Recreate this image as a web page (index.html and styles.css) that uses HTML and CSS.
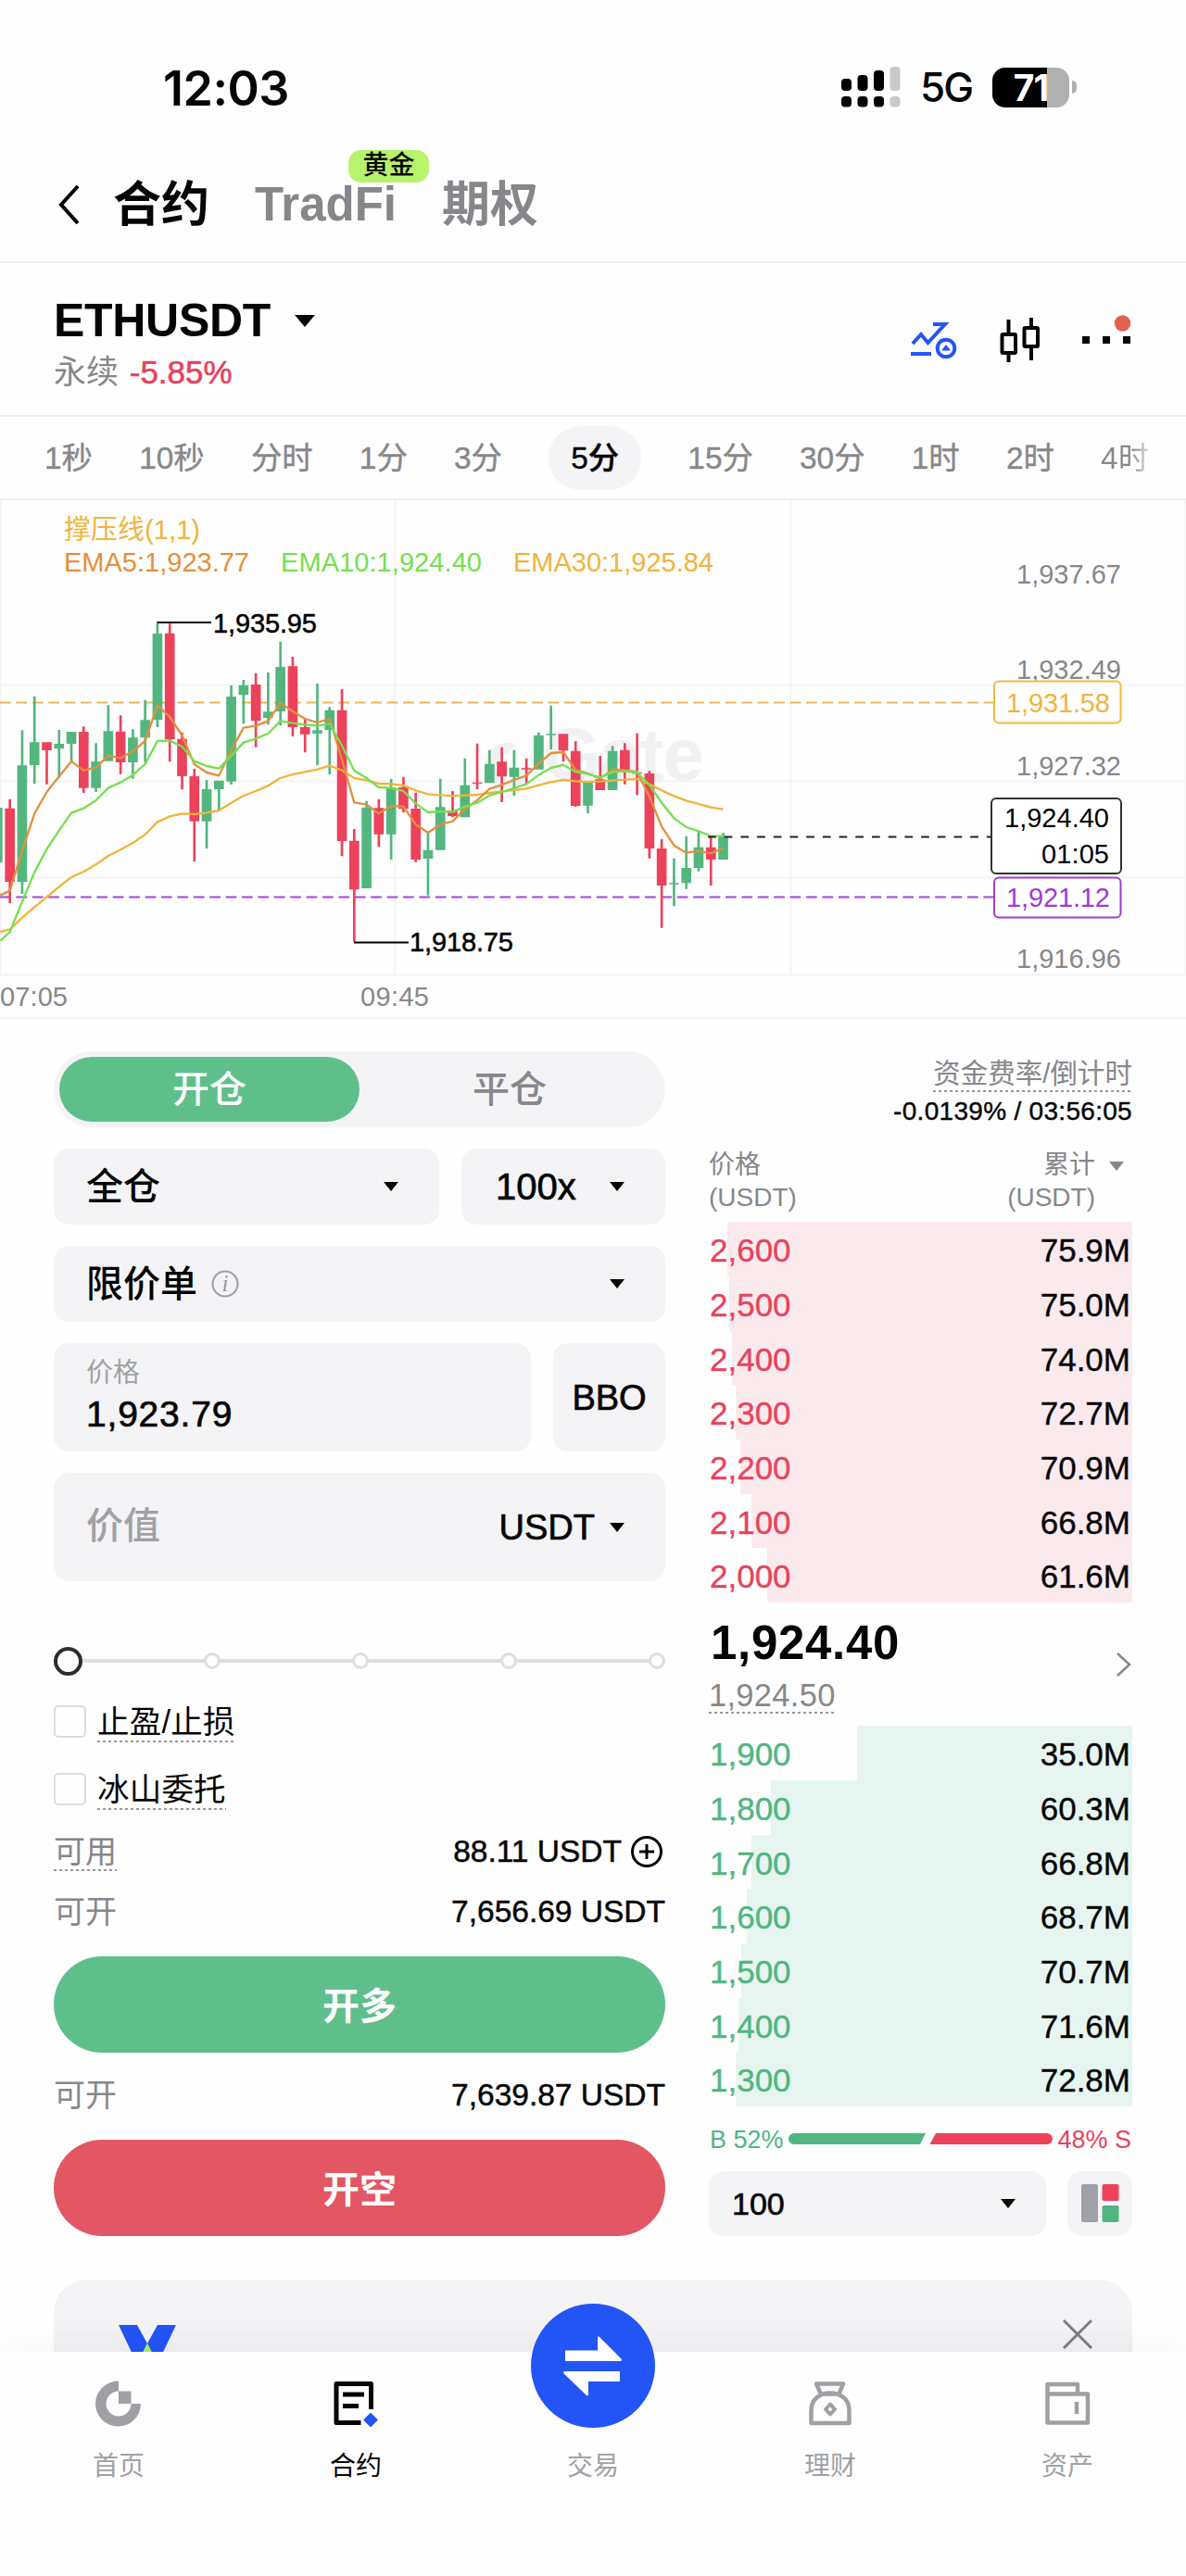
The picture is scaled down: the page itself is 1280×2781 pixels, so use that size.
FILE: index.html
```html
<!DOCTYPE html>
<html lang="zh-CN">
<head>
  <meta charset="UTF-8" />
  <title>ETHUSDT 永续合约</title>
  <link rel="stylesheet" href="styles.css">
</head>
<body>
  <div class="status-bar">
    <span class="time">12:03</span>
    <div class="status-icons">
      <svg class="signal" width="65" height="44" viewBox="0 0 65 44">
        <g fill="#000">
          <rect x="0" y="13" width="11" height="13" rx="4" />
          <rect x="17.500" y="9" width="11" height="17" rx="4" />
          <rect x="35" y="4" width="11" height="22" rx="4" />
          <rect x="0" y="32" width="11" height="11.500" rx="4" />
          <rect x="17.500" y="32" width="11" height="11.500" rx="4" />
          <rect x="35" y="32" width="11" height="11.500" rx="4" />
        </g>
        <g fill="#c9c9c9">
          <rect x="52.500" y="0" width="11" height="26" rx="4" />
          <rect x="52.500" y="32" width="11" height="11.500" rx="4" />
        </g>
      </svg>
      <span class="network">5G</span>
      <div class="battery"><span>71</span></div>
      <i class="battery-cap"></i>
    </div>
  </div>

  <header class="top-nav">
    <svg class="back" width="28" height="46" viewBox="0 0 28 46"><path d="M24 3 6 23l18 20" fill="none" stroke="#000" stroke-width="4" /></svg>
    <a class="active">合约</a>
    <a class="tradfi">TradFi<em>黄金</em></a>
    <a>期权</a>
  </header>

  <section class="symbol">
    <div>
      <h1>ETHUSDT <i class="caret caret-lg"></i></h1>
      <p>永续 <b>-5.85%</b></p>
    </div>
    <svg class="tools" width="240" height="56" viewBox="0 0 240 56">
      <g fill="none" stroke="#2354f5" stroke-width="4">
        <path d="M4 31 13 21l7.500 9L39 10H26" />
        <path d="M2 42h22" />
        <circle cx="40" cy="36" r="9.300" />
      </g>
      <path d="M35 38.500 40 32l5 6.500z" fill="#2354f5" />
      <g fill="none" stroke="#050505" stroke-width="4">
        <path d="M107.500 5v15M107.500 42v9M132 3v10M132 35v14" />
        <rect x="100.500" y="21" width="14.500" height="20" rx="1" />
        <rect x="124.500" y="14" width="14.500" height="20" rx="1" />
      </g>
      <path d="M187 23h8v8h-8zM209 23h8v8h-8zM231 23h8v8h-8z" fill="#050505" />
      <circle cx="230.500" cy="9" r="8.700" fill="#e4604f" />
    </svg>
  </section>

  <nav class="periods">
    <a>1秒</a><a>10秒</a><a>分时</a><a>1分</a><a>3分</a><a class="active">5分</a><a>15分</a><a>30分</a><a>1时</a><a>2时</a><a class="fade">4时</a>
  </nav>

  <section class="chart">
    <svg width="1280" height="559" viewBox="0 0 1280 559">
      <path class="grid" d="M0 199.500h1280M0 303.500h1280M0 407.500h1280M0 512.500h1280M.5 0v512M426.500 0v512M853.500 0v512M1279.500 0v512" />
      <g class="watermark">
        <path d="M556 263a25 25 0 1 0 17 25h-12a13 13 0 1 1-13-13z" />
        <text x="586" y="302" textLength="174">Gate</text>
      </g>
      <path class="dash" d="M0 218.500H1073" stroke="#e9b84e" />
      <path class="dash" d="M0 428.500H1073" stroke="#a544d8" />
      <g id="candles" transform="translate(0 100) scale(.33333)"></g>
      <path d="M764 363.500H1069" stroke="#222" stroke-width="2" stroke-dasharray="8.700 9" />
      <path d="M170 132H228M382 477.500H441" stroke="#000" stroke-width="2" />
      <g class="callout">
        <text x="230" y="142.500" textLength="112">1,935.95</text>
        <text x="442" y="487" textLength="112">1,918.75</text>
      </g>
      <g class="legend">
        <text x="69" y="42" fill="#efb43c" textLength="147">撑压线(1,1)</text>
        <text x="69" y="77" fill="#e58f3a" textLength="200">EMA5:1,923.77</text>
        <text x="303" y="77" fill="#74e04f" textLength="217">EMA10:1,924.40</text>
        <text x="554" y="77" fill="#efb43c" textLength="216">EMA30:1,925.84</text>
      </g>
      <g class="axis">
        <text x="1097" y="90" textLength="113">1,937.67</text>
        <text x="1097" y="193" textLength="113">1,932.49</text>
        <text x="1097" y="297" textLength="113">1,927.32</text>
        <text x="1097" y="505" textLength="113">1,916.96</text>
        <text x="0" y="546" textLength="73">07:05</text>
        <text x="389" y="546" textLength="74">09:45</text>
      </g>
      <g class="tags">
        <rect x="1073" y="195.500" width="136.500" height="45" rx="5" stroke="#efb941" />
        <text x="1086" y="229" fill="#efb43c" textLength="112">1,931.58</text>
        <rect x="1073" y="407.500" width="136.500" height="43" rx="5" stroke="#a13bd3" />
        <text x="1086" y="439" fill="#a13bd3" textLength="112">1,921.12</text>
        <rect x="1070" y="322" width="140" height="81" rx="5" stroke="#333" />
        <text x="1084" y="353" fill="#000" textLength="113">1,924.40</text>
        <text x="1124" y="392" fill="#000" textLength="73">01:05</text>
      </g>
    </svg>
  </section>

  <main class="trade">
    <section class="order-form">
      <div class="side-tabs"><a class="active">开仓</a><a>平仓</a></div>
      <div class="row">
        <div class="field margin-mode">全仓 <i class="caret"></i></div>
        <div class="field leverage">100x <i class="caret"></i></div>
      </div>
      <div class="field">
        <span>限价单</span>
        <svg class="info" width="32" height="32" viewBox="0 0 32 32"><circle cx="16" cy="16" r="13.500" fill="none" stroke="#a2a2a6" stroke-width="2.200" /><text x="12.500" y="24">i</text></svg>
        <i class="caret"></i>
      </div>
      <div class="row">
        <div class="field tall price"><label>价格</label><span>1,923.79</span></div>
        <div class="field tall bbo">BBO</div>
      </div>
      <div class="field tall amount"><span class="hint">价值</span><span class="unit">USDT</span><i class="caret"></i></div>

      <div class="slider"><i class="thumb"></i><i></i><i></i><i></i><i></i></div>

      <div class="check"><i></i><span>止盈/止损</span></div>
      <div class="check"><i></i><span>冰山委托</span></div>

      <div class="info-row"><span class="dotted">可用</span><b>88.11 USDT</b>
        <svg width="36" height="36" viewBox="0 0 36 36"><circle cx="18" cy="18" r="15.500" /><path d="M10 18h16M18 10v16" /></svg>
      </div>
      <div class="info-row"><span>可开</span><b>7,656.69 USDT</b></div>
      <button class="long">开多</button>
      <div class="info-row last"><span>可开</span><b>7,639.87 USDT</b></div>
      <button class="short">开空</button>
    </section>

    <section class="book">
      <div class="funding">
        <span class="dotted">资金费率/倒计时</span>
        <b>-0.0139% / 03:56:05</b>
      </div>
      <div class="book-head">
        <div>价格<br>(USDT)</div>
        <div class="total">累计<br>(USDT)</div>
        <i class="caret caret-gray"></i>
      </div>
      <div class="rows asks">
        <div class="level"><i style="width: 95.6%"></i><span>2,600</span><b>75.9M</b></div>
        <div class="level"><i style="width: 95.2%"></i><span>2,500</span><b>75.0M</b></div>
        <div class="level"><i style="width: 94.5%"></i><span>2,400</span><b>74.0M</b></div>
        <div class="level"><i style="width: 93.6%"></i><span>2,300</span><b>72.7M</b></div>
        <div class="level"><i style="width: 92.5%"></i><span>2,200</span><b>70.9M</b></div>
        <div class="level"><i style="width: 90%"></i><span>2,100</span><b>66.8M</b></div>
        <div class="level"><i style="width: 86.2%"></i><span>2,000</span><b>61.6M</b></div>
      </div>
      <div class="last-price">
        <div>
          <strong>1,924.40</strong>
          <span class="dotted">1,924.50</span>
        </div>
        <svg width="18" height="30" viewBox="0 0 18 30"><path d="M3 3 16 15 3 27" fill="none" stroke="#87878b" stroke-width="2.500" /></svg>
      </div>
      <div class="rows bids">
        <div class="level"><i style="width: 65%"></i><span>1,900</span><b>35.0M</b></div>
        <div class="level"><i style="width: 85.4%"></i><span>1,800</span><b>60.3M</b></div>
        <div class="level"><i style="width: 90%"></i><span>1,700</span><b>66.8M</b></div>
        <div class="level"><i style="width: 91.1%"></i><span>1,600</span><b>68.7M</b></div>
        <div class="level"><i style="width: 92.4%"></i><span>1,500</span><b>70.7M</b></div>
        <div class="level"><i style="width: 93%"></i><span>1,400</span><b>71.6M</b></div>
        <div class="level"><i style="width: 93.7%"></i><span>1,300</span><b>72.8M</b></div>
      </div>
      <div class="ratio">
        <span class="buy">B 52%</span>
        <svg width="285" height="12" viewBox="0 0 285 12">
          <path d="M6 0H148l-6 12H6A6 6 0 0 1 6 0z" fill="#50b681" />
          <path d="M159 0H279a6 6 0 0 1 0 12H152.500z" fill="#ee425b" />
        </svg>
        <span class="sell">48% S</span>
      </div>
      <div class="book-foot">
        <div class="field step">100 <i class="caret"></i></div>
        <div class="field layout">
          <svg width="41" height="42" viewBox="0 0 41 42">
            <rect width="18" height="41" rx="2" fill="#a0a1a7" />
            <rect x="22.500" width="18" height="18" rx="2" fill="#ee425b" />
            <rect x="22.500" y="23" width="18" height="18" rx="2" fill="#50b681" />
          </svg>
        </div>
      </div>
    </section>
  </main>

  <div class="banner">
    <svg width="62" height="50" viewBox="0 0 62 50">
      <path d="M0 0H20L31 20 20 42z" fill="#2354f5" />
      <path d="M62 0H42L31 20 42 42z" fill="#2354f5" />
      <path d="M31 20 19 44H43z" fill="#a6ee5b" />
    </svg>
    <svg class="close" width="34" height="34" viewBox="0 0 34 34"><path d="M2 2 32 32M32 2 2 32" stroke="#7d7d81" stroke-width="3" /></svg>
  </div>

  <footer class="tab-bar">
    <a>
      <svg width="50" height="50" viewBox="0 0 50 50"><path d="M25 .5a24.500 24.500 0 1 0 24 24.500H38.500A13.500 13.500 0 1 1 25 11.500z" fill="#9fa0a4" /><path d="M25 11.500h13.500V25H25z" fill="#9fa0a4" /></svg>
      首页
    </a>
    <a class="active">
      <svg width="50" height="50" viewBox="0 0 50 50">
        <path d="M30.500 45.500H4V3.500h37.500V31M11 15h23M11 27.500h17" fill="none" stroke="#050505" stroke-width="5" stroke-linejoin="round" />
        <path d="M41 36l6.500 6.500L41 49l-6.500-6.500z" fill="#2354f5" stroke="#2354f5" stroke-width="2" stroke-linejoin="round" />
      </svg>
      合约
    </a>
    <a>
      <span class="swap"><svg width="134" height="134" viewBox="0 0 134 134"><path d="M37 50.500H72V37q0-3 2-1L97.500 59.500q1 2.500-1 2.500H37zM96 73v11H62V98q0 2-2 1L35.500 75.500q-1-2.500 1-2.500z" fill="#fff" /></svg></span>
      交易
    </a>
    <a>
      <svg width="50" height="50" viewBox="0 0 50 50" fill="none" stroke="#9fa0a4" stroke-width="4.500" stroke-linejoin="round">
        <path d="M10 3.500H39L34.500 14.500H15zM4.500 46V32C4.500 20 14 13.500 25 13.500S45.500 20 45.500 32V46z" />
        <path d="M25 25.500l5 5.500-5 5.500-5-5.500z" stroke-width="4" />
      </svg>
      理财
    </a>
    <a>
      <svg width="50" height="50" viewBox="0 0 50 50" fill="none" stroke="#9fa0a4" stroke-width="4.500" stroke-linejoin="round">
        <path d="M3.500 45.500V4H36V14.500M3.500 14.500H47V45.500H3.500zM35 23v13" />
      </svg>
      资产
    </a>
  </footer>

<script>
  // [up, high, top, bottom, low], one third of a pixel each
  const candles = [
    [0,668,698,936,1005],[1,445,559,936,975],[1,335,484,558,618],[0,484,484,510,620],[1,444,489,505,600],
    [1,450,450,489,545],[0,433,450,632,648],[1,487,547,632,645],[1,364,448,545,545],[0,397,449,549,587],
    [1,442,469,549,602],[1,347,412,469,550],[1,92,132,411,435],[0,100,131,475,547],[0,452,473,594,637],
    [0,570,594,740,870],[1,606,636,740,828],[1,608,608,636,703],[1,300,336,611,621],[1,282,299,331,424],
    [0,260,297,415,500],[1,258,385,405,427],[1,158,240,384,430],[0,207,238,435,465],[0,410,435,458,517],
    [1,294,445,456,558],[1,370,380,444,588],[0,312,380,804,853],[0,765,803,961,1130],[1,674,695,957,957],
    [0,668,697,782,823],[1,603,630,782,864],[0,596,630,700,712],[0,647,699,864,872],[1,778,833,861,980],
    [1,602,694,833,833],[0,642,705,723,727],[1,536,623,727,727],[0,488,614,618,636],[1,509,554,616,616],
    [0,500,547,595,678],[1,509,566,596,657],[0,536,568,572,618],[1,452,462,572,572],[1,365,457,461,507],
    [0,457,457,511,547],[0,481,512,690,693],[1,612,615,689,715],[0,528,604,639,639],[1,496,512,639,639],
    [0,487,509,575,620],[0,455,582,586,655],[0,577,585,828,860],[0,798,828,948,1085],[1,860,940,944,1015],
    [1,788,891,940,959],[1,772,824,891,902],[0,792,824,864,948],[1,777,790,864,864]
  ];
  const lines = {
    '#efb43c': [1098,1090,1052,1018,985,952,921,903,880,852,832,810,783,742,724,715,717,712,705,680,657,642,625,600,588,580,572,560,575,600,607,618,619,624,640,652,655,658,656,654,648,643,639,634,623,613,606,610,612,611,608,605,603,620,640,658,673,684,695,701],
    '#e2913c': [980,965,835,715,645,595,546,575,566,527,535,513,480,364,402,462,555,582,592,510,437,431,415,357,384,408,420,408,540,679,686,715,690,692,750,777,750,740,700,672,635,622,606,592,553,519,516,574,585,602,572,574,580,660,757,818,842,836,844,826],
    '#74e04f': [1128,1098,1000,905,830,770,713,698,672,632,614,590,555,480,479,498,545,561,569,528,485,472,456,415,422,427,430,424,495,576,600,630,632,642,682,711,708,710,692,680,656,645,633,619,590,567,557,580,586,598,580,578,582,622,680,730,759,772,788,788]
  };
  const step = 39.82;
  let out = '<path d="M0 696h8v177H0z" fill="#53b67f"/>';
  candles.forEach(([up, high, top, bottom, low], i) => {
    const x = 32 + i * step;
    out += `<path fill="${up ? '#53b67f' : '#ec425b'}" d="M${x - 4} ${high}h8V${low}h-8zM${x - 16} ${top}h32V${bottom}h-32z"/>`;
  });
  for (const color in lines) {
    const pts = lines[color].map((y, i) => (i ? 32 + (i - 1) * step : 0) + ',' + y).join(' ');
    out += `<polyline points="${pts}" fill="none" stroke="${color}" stroke-width="7" stroke-linejoin="round"/>`;
  }
  document.getElementById('candles').innerHTML = out;
</script>
</body>
</html>
```
FILE: styles.css
```css
:root {
  --green: #50b681;
  --green-btn: #5fbf8b;
  --red: #ee425b;
  --blue: #2354f5;
  --text: #050505;
  --gray: #87878b;
  --light-gray: #a0a1a5;
  --field: #f4f4f7;
  --line: #efeff1;
}

* {
  box-sizing: border-box;
}

body {
  margin: 0;
  width: 1280px;
  height: 2781px;
  overflow: hidden;
  display: flex;
  flex-direction: column;
  background: #fefefe;
  color: var(--text);
  font-family: "Liberation Sans", "Noto Sans CJK SC", sans-serif;
}

h1, p {
  margin: 0;
}

b, em, i {
  font-weight: normal;
  font-style: normal;
}

svg {
  display: block;
  flex: none;
}

.caret {
  display: inline-block;
  flex: none;
  border: 8px solid transparent;
  border-top: 10px solid var(--text);
  border-bottom: 0;
}

.caret-lg {
  border-width: 13px 11px 0;
  margin-left: 26px;
}

.caret-gray {
  border-top-color: var(--gray);
}

.dotted {
  background: repeating-linear-gradient(90deg, #97979b 0 3px, transparent 3px 6px) left bottom / 100% 2px no-repeat;
}

/* status bar */
.status-bar {
  height: 160px;
  padding: 31px 118px 0 176px;
  display: flex;
  justify-content: space-between;
  align-items: flex-start;
  font-family: Inter, sans-serif;
}

.time {
  font-size: 52px;
  line-height: 129px;
  font-weight: 600;
  letter-spacing: -0.5px;
}

.status-icons {
  display: flex;
  align-items: center;
  padding-top: 41px;
}

.network {
  width: 62px;
  margin-left: 20px;
  font-size: 44px;
  line-height: 44px;
  font-weight: 500;
  letter-spacing: -2px;
}

.battery {
  width: 83px;
  height: 43px;
  margin-left: 16px;
  border-radius: 14px;
  background: linear-gradient(90deg, #000 59px, #b0b0b0 59px);
  color: #fff;
  font-size: 39px;
  line-height: 43px;
  font-weight: 700;
  text-align: center;
  letter-spacing: -1px;
}

.battery-cap {
  width: 5px;
  height: 14px;
  margin-left: 3px;
  border-radius: 0 5px 5px 0;
  background: #b0b0b0;
}

/* product tabs */
.top-nav {
  height: 124px;
  padding: 8px 0 0 60px;
  border-bottom: 2px solid var(--line);
  display: flex;
  align-items: flex-start;
  font-size: 52px;
  line-height: 106px;
  font-weight: 700;
  color: var(--gray);
}

.top-nav .back {
  margin: 30px 34px 0 0;
}

.top-nav a {
  margin-right: 49px;
}

.top-nav .active {
  color: var(--text);
}

.top-nav .tradfi {
  position: relative;
  font-size: 51px;
}

.tradfi em {
  position: absolute;
  left: 101px;
  top: -6px;
  width: 87px;
  height: 35px;
  border-radius: 14px;
  background: #b7f36b;
  color: var(--text);
  font-size: 28px;
  line-height: 34px;
  font-weight: 500;
  text-align: center;
}

/* symbol */
.symbol {
  height: 166px;
  padding: 31px 59px 0 58px;
  border-bottom: 2px solid var(--line);
  display: flex;
  justify-content: space-between;
}

.symbol h1 {
  display: flex;
  align-items: center;
  font-size: 50px;
  line-height: 62px;
  letter-spacing: -0.3px;
}

.symbol p {
  font-size: 35px;
  line-height: 50px;
  color: var(--gray);
}

.symbol p b {
  margin-left: 2px;
  color: #e3445e;
  font-size: 35px;
  -webkit-text-stroke: 0.6px;
}

.tools {
  margin-top: 25px;
}

/* chart periods */
.periods {
  height: 90px;
  padding: 0 0 0 48px;
  border-bottom: 2px solid var(--line);
  display: flex;
  align-items: center;
  gap: 50.2px;
  font-size: 33.4px;
  line-height: 69px;
  white-space: nowrap;
  color: var(--gray);
  -webkit-text-stroke: 0.4px;
}

.periods .active {
  padding: 0 24px;
  border-radius: 35px;
  background: var(--field);
  color: var(--text);
  font-weight: 500;
}

.periods .fade {
  background: linear-gradient(90deg, var(--gray) 60%, #dcdcde);
  -webkit-background-clip: text;
  color: transparent;
  -webkit-text-stroke: 0;
}

/* chart */
.chart {
  height: 560px;
  border-bottom: 2px solid #f3f3f5;
}

.chart text {
  font-size: 29px;
}

.grid {
  stroke: #f3f3f5;
  stroke-width: 2;
}

.watermark {
  fill: #f1f1f4;
}

.chart .watermark text {
  font-size: 80px;
  font-weight: bold;
}

.dash {
  stroke-width: 2;
  stroke-dasharray: 11.7 5.7;
}

.callout {
  stroke: #000;
  stroke-width: 0.5;
}

.axis {
  fill: var(--gray);
}

.tags rect {
  fill: #fff;
  stroke-width: 2;
}

/* order form */
.trade {
  padding: 35px 58px 0;
  height: 1360px;
  display: grid;
  grid-template-columns: 660px 457px;
  gap: 47px;
}

.side-tabs {
  height: 82px;
  padding: 6px;
  border-radius: 41px;
  background: var(--field);
  display: flex;
  font-size: 40px;
  font-weight: 500;
  line-height: 70px;
  text-align: center;
  color: var(--gray);
}

.side-tabs a {
  flex: 1;
}

.side-tabs .active {
  border-radius: 35px;
  background: var(--green-btn);
  color: #fff;
}

.row {
  display: flex;
  gap: 24px;
}

.field {
  height: 82px;
  margin-top: 23px;
  padding: 0 44px 0 35px;
  border-radius: 16px;
  background: var(--field);
  display: flex;
  align-items: center;
  font-size: 40px;
  line-height: 58px;
  font-weight: 500;
}

.field .caret {
  margin-left: auto;
}

.margin-mode {
  width: 416px;
}

.leverage {
  flex: 1;
  padding-left: 37px;
}

.leverage, .price span, .bbo, .unit, .step {
  -webkit-text-stroke: 0.7px;
}

.info {
  margin-left: 14px;
}

.info text {
  font: italic 25px "Liberation Serif", serif;
  fill: #98989c;
}

.tall {
  height: 117px;
}

.price {
  flex: 1;
  flex-direction: column;
  align-items: flex-start;
  padding-top: 12px;
}

.price label {
  font-size: 29px;
  line-height: 40px;
  font-weight: 400;
  color: var(--light-gray);
}

.price span {
  font-size: 39px;
  line-height: 50px;
  letter-spacing: 0.8px;
}

.bbo {
  width: 121px;
  padding: 0;
  justify-content: center;
  font-size: 38px;
}

.hint {
  margin-top: -3px;
  color: var(--light-gray);
}

.amount .unit {
  margin-left: auto;
  font-size: 38px;
}

.amount .caret {
  margin-left: 16px;
}

.slider {
  height: 32px;
  margin-top: 70px;
  display: flex;
  justify-content: space-between;
  align-items: center;
  background: linear-gradient(#dedee0, #dedee0) center / 640px 4px no-repeat;
}

.slider i {
  width: 18px;
  height: 18px;
  border: 3px solid #dedee0;
  border-radius: 50%;
  background: #fefefe;
}

.slider .thumb {
  width: 31px;
  height: 31px;
  margin-right: -11px;
  border: 4px solid #2c2c33;
}

.check {
  height: 35px;
  margin-top: 32px;
  display: flex;
  font-size: 34.5px;
  line-height: 36px;
  letter-spacing: 0.2px;
}

.check + .check {
  margin-top: 38px;
}

.check i {
  width: 35px;
  height: 35px;
  margin-right: 12px;
  border: 2.5px solid #dcdce0;
  border-radius: 5px;
}

.check span {
  height: 40px;
  background: repeating-linear-gradient(90deg, #97979b 0 3px, transparent 3px 6px) left bottom / 100% 2px no-repeat;
}

.info-row {
  height: 44px;
  margin-top: 21px;
  display: flex;
  align-items: center;
  font-size: 34px;
  line-height: 42px;
  color: var(--gray);
}

.check + .info-row {
  margin-top: 28px;
}

.info-row b {
  margin-left: auto;
  color: var(--text);
  font-size: 33.5px;
  -webkit-text-stroke: 0.5px;
}

.info-row svg {
  margin: 0 2px 0 9px;
  fill: none;
  stroke: var(--text);
  stroke-width: 3;
}

.order-form button {
  display: block;
  width: 100%;
  height: 104px;
  padding: 0 0 3px;
  border: none;
  border-radius: 52px;
  color: #fff;
  font: 700 40px "Noto Sans CJK SC", sans-serif;
}

.order-form .long {
  margin-top: 26px;
  background: var(--green-btn);
}

.last {
  margin-top: 24px;
}

.order-form .short {
  margin-top: 26px;
  background: #e25763;
}

/* order book */
.funding {
  display: flex;
  flex-direction: column;
  align-items: flex-end;
  padding-top: 4px;
}

.funding span {
  height: 40px;
  font-size: 29.5px;
  line-height: 40px;
  color: var(--gray);
}

.funding b {
  font-size: 28px;
  line-height: 41px;
  letter-spacing: 0.3px;
  -webkit-text-stroke: 0.4px;
}

.book-head {
  height: 99px;
  padding-top: 20px;
  display: flex;
  font-size: 28px;
  line-height: 35px;
  color: var(--gray);
}

.book-head .total {
  margin-left: auto;
  text-align: right;
}

.book-head .caret {
  margin: 14px 9px 0 15px;
}

.level {
  position: relative;
  height: 59px;
  padding: 0 2px 0 1px;
  display: flex;
  justify-content: space-between;
  font-size: 35px;
  line-height: 61px;
  -webkit-text-stroke: 0.4px;
}

.level:nth-child(3n) {
  height: 58px;
}

.level i {
  position: absolute;
  right: 0;
  top: 0;
  bottom: 0;
}

.level span, .level b {
  position: relative;
}

.asks i {
  background: #fbeaed;
}

.bids i {
  background: #e7f5f0;
}

.asks span, .sell {
  color: #e8435d;
}

.bids span, .buy {
  color: var(--green);
}

.last-price {
  height: 133px;
  padding: 16px 1px 0 0;
  display: flex;
  justify-content: space-between;
}

.last-price strong {
  display: block;
  font-size: 51px;
  line-height: 56px;
  margin-left: 2px;
  letter-spacing: 0.7px;
}

.last-price span {
  display: inline-block;
  height: 48px;
  font-size: 34.5px;
  line-height: 56px;
  letter-spacing: 0.3px;
  color: var(--gray);
}

.last-price svg {
  margin-top: 36px;
}

.ratio {
  height: 70px;
  padding: 2px 1px 0;
  display: flex;
  justify-content: space-between;
  align-items: center;
  font-size: 27px;
  white-space: nowrap;
}

.ratio svg {
  margin-bottom: 2px;
}

.book-foot {
  display: flex;
  justify-content: space-between;
}

.book-foot .field {
  height: 70px;
  margin: 0;
}

.book-foot .step {
  width: 364px;
  padding: 0 33px 0 25px;
  font-size: 34px;
}

.book-foot .layout {
  width: 70px;
  padding: 0 0 0 15px;
}

/* banner behind the tab bar */
.banner {
  height: 80px;
  flex: none;
  margin: 1px 58px 0;
  padding: 49px 42px 0 70px;
  border-radius: 36px 36px 0 0;
  background: linear-gradient(#f4f4f7 50%, #efeff2);
  display: flex;
  justify-content: space-between;
  overflow: hidden;
}

.banner .close {
  margin-top: -7px;
}

/* bottom tab bar */
.tab-bar {
  position: relative;
  flex: 1;
  margin-top: -2px;
  background: #fefefe;
  box-shadow: 0 -4px 30px rgb(0 0 0 / 0.03);
  display: grid;
  grid-template-columns: repeat(5, 1fr);
  align-items: start;
}

.tab-bar a {
  padding-top: 31px;
  display: flex;
  flex-direction: column;
  align-items: center;
  gap: 22px;
  font-size: 28px;
  line-height: 42px;
  color: var(--light-gray);
}

.tab-bar .active {
  color: var(--text);
}

.swap {
  width: 134px;
  height: 134px;
  margin: -83px 0 -1px;
  border-radius: 50%;
  background: var(--blue);
}
```
